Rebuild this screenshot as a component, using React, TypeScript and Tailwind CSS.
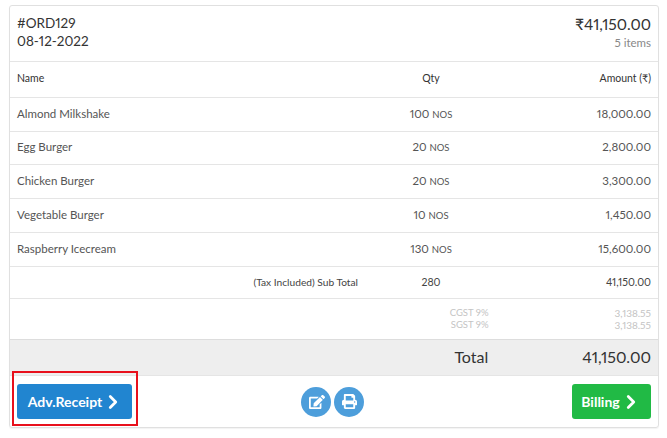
import React from 'react'
import { ChevronRight } from 'lucide-react'
import { FaEdit, FaPrint } from 'react-icons/fa'

const items = [
  { name: 'Almond Milkshake', qty: 100, amount: '18,000.00', height: 'h-[34px]' },
  { name: 'Egg Burger', qty: 20, amount: '2,800.00', height: 'h-[33px]' },
  { name: 'Chicken Burger', qty: 20, amount: '3,300.00', height: 'h-[34px]' },
  { name: 'Vegetable Burger', qty: 10, amount: '1,450.00', height: 'h-[34px]' },
  { name: 'Raspberry Icecream', qty: 130, amount: '15,600.00', height: 'h-[34px]' },
]

export default function App() {
  return (
    <div className="w-[667px] h-[438px] bg-white pt-[5px] pl-[9px] font-['Lato','Open_Sans',sans-serif] proportional-nums text-[#333]">
      <div className="w-[650px] h-[423px] border border-[#e0e0e0] rounded-[3px] shadow-[0_1px_1px_rgba(0,0,0,0.05)] flex flex-col">
        <div className="h-[56px] flex justify-between items-start pl-[7px] pr-[7px] pt-[8px] border-b border-[#e5e5e5]">
          <div className="text-[13.5px] leading-[18px] text-[#333]">
            <div>#ORD129</div>
            <div>08-12-2022</div>
          </div>
          <div className="text-right">
            <div className="text-[15.6px] leading-[20px] text-[#333]">₹41,150.00</div>
            <div className="text-[11.5px] leading-[16px] mt-[1px] text-[#888]">5 items</div>
          </div>
        </div>

        <div className="h-[36px] grid grid-cols-[332px_164px_1fr] items-center pl-[7px] pr-[7px] pb-[2px] border-b border-[#e5e5e5] text-[10.5px] text-[#333]">
          <div>Name</div>
          <div className="text-center">Qty</div>
          <div className="text-right">Amount (₹)</div>
        </div>

        {items.map((item) => (
          <div
            key={item.name}
            className={`${item.height} grid grid-cols-[332px_164px_1fr] items-center pl-[7px] pr-[7px] pb-[2px] border-b border-[#e5e5e5] text-[11.5px] text-[#555]`}
          >
            <div>{item.name}</div>
            <div className="text-center">
              {item.qty} <span className="text-[9.5px]">NOS</span>
            </div>
            <div className="text-right">{item.amount}</div>
          </div>
        ))}

        <div className="h-[32px] grid grid-cols-[332px_164px_1fr] items-center pl-[7px] pr-[7px] border-b border-[#e5e5e5] text-[10.5px] text-[#444]">
          <div className="text-right text-[10.2px] mr-[-9px]">(Tax Included) Sub Total</div>
          <div className="text-center">280</div>
          <div className="text-right">41,150.00</div>
        </div>

        <div className="h-[41px] flex justify-end items-center pl-[7px] pr-[7px] border-b border-[#ddd] text-[9.5px] leading-[12px] text-[#c4c4c4]">
          <div className="text-right mr-[126px]">
            <div>CGST 9%</div>
            <div>SGST 9%</div>
          </div>
          <div className="text-right text-[10px]">
            <div>3,138.55</div>
            <div>3,138.55</div>
          </div>
        </div>

        <div className="h-[36px] bg-[#eeeeee] flex justify-end items-center pl-[7px] pr-[7px] pb-[1px] border-b border-[#e5e5e5] text-[16px] text-[#333]">
          <div className="mr-[94px]">Total</div>
          <div>41,150.00</div>
        </div>

        <div className="relative flex-1 flex items-center justify-between pl-[7px] pr-[7px]">
          <button className="w-[115px] h-[35px] bg-[#2185d0] rounded-[3px] text-white font-bold text-[14px] flex items-center justify-center pl-[3px]">
            Adv.Receipt <ChevronRight size={22} strokeWidth={3} />
          </button>
          <div className="flex items-center gap-[3px] mr-[39px]">
            <button className="w-[30px] h-[30px] rounded-full bg-[#4d9edb] text-white flex items-center justify-center">
              <FaEdit className="text-[16px] ml-[1px]" />
            </button>
            <button className="w-[30px] h-[30px] rounded-full bg-[#4d9edb] text-white flex items-center justify-center">
              <FaPrint className="text-[15px]" />
            </button>
          </div>
          <button className="w-[79px] h-[35px] bg-[#21ba45] rounded-[3px] text-white font-bold text-[14px] flex items-center justify-center">
            Billing <ChevronRight size={22} strokeWidth={3} />
          </button>
          <div className="absolute left-[2px] top-[-5px] w-[126px] h-[55px] border-2 border-[#e8101c] pointer-events-none" />
        </div>
      </div>
    </div>
  )
}
